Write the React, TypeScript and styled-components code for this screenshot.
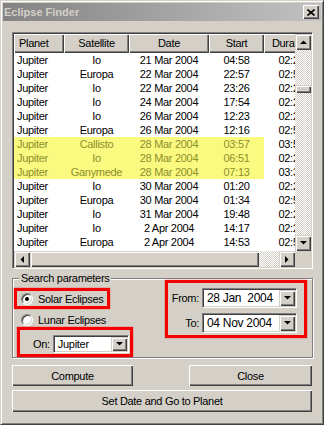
import React from 'react';
import styled, { createGlobalStyle, css } from 'styled-components';

const GlobalStyle = createGlobalStyle`
  html, body { margin: 0; padding: 0; background: #d4d0c8; }
  body { font-family: "Liberation Sans", Arial, sans-serif; font-size: 11px; color: #000; letter-spacing: -0.3px; }
  * { box-sizing: border-box; }
`;

const raisedBtn = css`
  background: #d4d0c8;
  box-shadow: inset 1px 1px #fff, inset -1px -1px #404040, inset -2px -2px #808080;
`;

const raisedScroll = css`
  background: #d4d0c8;
  box-shadow: inset 1px 1px #d4d0c8, inset 2px 2px #fff, inset -1px -1px #404040, inset -2px -2px #808080;
`;

const sunken = css`
  border: 1px solid;
  border-color: #808080 #fff #fff #808080;
  box-shadow: inset 1px 1px #404040, inset -1px -1px #d4d0c8;
`;

const checker = css`
  background: repeating-conic-gradient(#d4d0c8 0 25%, #fff 0 50%) 0 0 / 2px 2px;
`;

const Window = styled.div`
  width: 324px;
  height: 425px;
  display: flex;
  flex-direction: column;
  border: 1px solid;
  border-color: #d4d0c8 #404040 #404040 #d4d0c8;
  box-shadow: inset 1px 1px #fff, inset -1px -1px #808080;
  padding: 2px;
  background: #d4d0c8;
`;

const TitleBar = styled.div`
  height: 18px;
  display: flex;
  align-items: center;
  padding: 0 2px 0 1px;
  background: linear-gradient(to right, #838383, #c2c2c2);
  color: #d4d0c8;
  font-weight: bold;
  font-size: 11px;
  letter-spacing: 0;
`;

const TitleText = styled.span`
  flex: 1;
`;

const CloseButton = styled.div`
  ${raisedBtn};
  width: 16px;
  height: 14px;
  display: flex;
  align-items: center;
  justify-content: center;
`;

const Body = styled.div`
  flex: 1;
  display: flex;
  flex-direction: column;
  padding: 11px 8px 0 9px;
`;

const ListBox = styled.div`
  ${sunken};
  height: 237px;
  padding: 1px;
  display: grid;
  grid-template-columns: 1fr 16px;
  grid-template-rows: 1fr 16px;
  background: #fff;
`;

const ListContent = styled.div`
  grid-area: 1 / 1;
  overflow: hidden;
  background: #fff;
`;

const Table = styled.div`
  display: grid;
  grid-template-columns: 50px 65px 80px 55px 55px;
  width: max-content;
`;

const HeaderCell = styled.div<{ $align?: string }>`
  ${raisedBtn};
  height: 19px;
  line-height: 19px;
  padding-left: ${(p) => (p.$align === 'left' ? '5px' : '0')};
  text-align: ${(p) => p.$align || 'center'};
  white-space: nowrap;
  overflow: hidden;
`;

const Cell = styled.div<{ $align?: string; $hl?: boolean }>`
  height: 14px;
  line-height: 14px;
  white-space: nowrap;
  overflow: hidden;
  text-align: ${(p) => p.$align || 'center'};
  padding-left: ${(p) => (p.$align === 'left' ? '3px' : '0')};
  background: ${(p) => (p.$hl ? '#fafa80' : '#fff')};
  color: ${(p) => (p.$hl ? '#8e8e2c' : '#000')};
`;

const VScroll = styled.div`
  grid-area: 1 / 2;
  display: flex;
  flex-direction: column;
`;

const HScroll = styled.div`
  grid-area: 2 / 1;
  display: flex;
`;

const Corner = styled.div`
  grid-area: 2 / 2;
  background: #d4d0c8;
`;

const ScrollBtn = styled.div`
  ${raisedScroll};
  width: 16px;
  height: 16px;
  flex-shrink: 0;
  display: flex;
  align-items: center;
  justify-content: center;
`;

const Track = styled.div<{ $size?: number }>`
  ${checker};
  flex: ${(p) => (p.$size ? `0 0 ${p.$size}px` : '1')};
`;

const Thumb = styled.div<{ $w?: number; $h?: number }>`
  ${raisedScroll};
  flex-shrink: 0;
  width: ${(p) => (p.$w ? `${p.$w}px` : '16px')};
  height: ${(p) => (p.$h ? `${p.$h}px` : '16px')};
`;

const Group = styled.div`
  position: relative;
  margin-top: 9px;
  border: 1px solid #808080;
  box-shadow: inset 1px 1px #fff, 1px 1px #fff;
  padding: 0 5px 0 1px;
  display: flex;
  justify-content: space-between;
  align-items: flex-start;
`;

const Legend = styled.span`
  position: absolute;
  top: -7px;
  left: 6px;
  padding: 0 2px;
  line-height: 13px;
  background: #d4d0c8;
`;

const LeftCol = styled.div`
  display: flex;
  flex-direction: column;
  align-items: flex-start;
  margin-top: 9px;
`;

const Mark = styled.div`
  border: 3px solid #f40000;
  box-shadow: 0 0 1px #f40000;
`;

const SolarMark = styled(Mark)`
  width: 96px;
  height: 21px;
  display: flex;
  align-items: center;
  gap: 5px;
  padding-left: 4px;
  white-space: nowrap;
`;

const RadioRow = styled.div`
  height: 14px;
  margin-top: 4px;
  padding-left: 7px;
  display: flex;
  align-items: center;
  gap: 5px;
  white-space: nowrap;
`;

const Radio = styled.span<{ $checked?: boolean }>`
  position: relative;
  width: 12px;
  height: 12px;
  flex-shrink: 0;
  border-radius: 50%;
  background: #fff;
  border: 1px solid;
  border-color: #808080 #fff #fff #808080;
  box-shadow: inset 1px 1px #404040, inset -1px -1px #d4d0c8;
  &::after {
    content: '';
    display: ${(p) => (p.$checked ? 'block' : 'none')};
    position: absolute;
    left: 3px;
    top: 3px;
    width: 4px;
    height: 4px;
    border-radius: 50%;
    background: #000;
  }
`;

const OnMark = styled(Mark)`
  width: 116px;
  margin-left: 3px;
  padding: 5px 1px 1px 13px;
  display: flex;
  align-items: center;
  gap: 3px;
`;

const DateMark = styled(Mark)`
  margin-top: 1px;
  width: 142px;
  padding: 5px 7px 2px 3px;
  display: grid;
  grid-template-columns: 28px 95px;
  column-gap: 3px;
  row-gap: 5px;
  align-items: center;
`;

const FieldLabel = styled.span`
  text-align: right;
`;

const Combo = styled.div<{ $w: number; $h: number }>`
  ${sunken};
  width: ${(p) => p.$w}px;
  height: ${(p) => p.$h}px;
  background: #fff;
  padding: 1px;
  display: flex;
  align-items: stretch;
`;

const ComboText = styled.span<{ $size?: number }>`
  flex: 1;
  padding-left: 3px;
  display: flex;
  align-items: center;
  font-size: ${(p) => p.$size || 11}px;
  white-space: pre;
`;

const ComboBtn = styled.div`
  ${raisedScroll};
  width: 16px;
  display: flex;
  align-items: center;
  justify-content: center;
`;

const ButtonRow = styled.div`
  display: flex;
  justify-content: space-between;
  margin-top: 7px;
  margin-right: 1px;
`;

const PushButton = styled.div<{ $w?: number; $h?: number }>`
  ${raisedBtn};
  width: ${(p) => (p.$w ? `${p.$w}px` : 'auto')};
  height: ${(p) => p.$h || 21}px;
  display: flex;
  align-items: center;
  justify-content: center;
`;

const WideButton = styled(PushButton)`
  margin-top: 4px;
  margin-right: 1px;
`;

const Arrow = ({ dir }: { dir: 'up' | 'down' | 'left' | 'right' }) => {
  const vertical = dir === 'up' || dir === 'down';
  const w = vertical ? 7 : 4;
  const h = vertical ? 4 : 7;
  const pts =
    dir === 'up'
      ? '0,4 7,4 3.5,0.5'
      : dir === 'down'
      ? '0,0 7,0 3.5,3.5'
      : dir === 'left'
      ? '4,0 4,7 0.5,3.5'
      : '0,0 0,7 3.5,3.5';
  return (
    <svg width={w} height={h} viewBox={`0 0 ${w} ${h}`}>
      <polygon points={pts} fill="#000" />
    </svg>
  );
};

type Row = [string, string, string, string, string, boolean?];

const rows: Row[] = [
  ['Jupiter', 'Io', '21 Mar 2004', '04:58', '02:24'],
  ['Jupiter', 'Europa', '22 Mar 2004', '22:57', '02:52'],
  ['Jupiter', 'Io', '22 Mar 2004', '23:26', '02:24'],
  ['Jupiter', 'Io', '24 Mar 2004', '17:54', '02:24'],
  ['Jupiter', 'Io', '26 Mar 2004', '12:23', '02:24'],
  ['Jupiter', 'Europa', '26 Mar 2004', '12:16', '02:52'],
  ['Jupiter', 'Callisto', '28 Mar 2004', '03:57', '03:51', true],
  ['Jupiter', 'Io', '28 Mar 2004', '06:51', '02:24', true],
  ['Jupiter', 'Ganymede', '28 Mar 2004', '07:13', '03:31', true],
  ['Jupiter', 'Io', '30 Mar 2004', '01:20', '02:24'],
  ['Jupiter', 'Europa', '30 Mar 2004', '01:34', '02:52'],
  ['Jupiter', 'Io', '31 Mar 2004', '19:48', '02:24'],
  ['Jupiter', 'Io', '2 Apr 2004', '14:17', '02:24'],
  ['Jupiter', 'Europa', '2 Apr 2004', '14:53', '02:52'],
];

export default function App() {
  return (
    <>
      <GlobalStyle />
      <Window>
        <TitleBar>
          <TitleText>Eclipse Finder</TitleText>
          <CloseButton>
            <svg width="8" height="7" viewBox="0 0 8 7">
              <path d="M0.5 0.5 L7.5 6.5 M7.5 0.5 L0.5 6.5" stroke="#000" strokeWidth="1.6" />
            </svg>
          </CloseButton>
        </TitleBar>
        <Body>
          <ListBox>
            <ListContent>
              <Table>
                <HeaderCell $align="left">Planet</HeaderCell>
                <HeaderCell>Satellite</HeaderCell>
                <HeaderCell>Date</HeaderCell>
                <HeaderCell>Start</HeaderCell>
                <HeaderCell>Duration</HeaderCell>
                {rows.map((r, i) => (
                  <React.Fragment key={i}>
                    <Cell $align="left" $hl={r[5]}>{r[0]}</Cell>
                    <Cell $hl={r[5]}>{r[1]}</Cell>
                    <Cell $hl={r[5]}>{r[2]}</Cell>
                    <Cell $hl={r[5]}>{r[3]}</Cell>
                    <Cell>{r[4]}</Cell>
                  </React.Fragment>
                ))}
              </Table>
            </ListContent>
            <VScroll>
              <ScrollBtn><Arrow dir="up" /></ScrollBtn>
              <Track $size={35} />
              <Thumb $h={8} />
              <Track />
              <ScrollBtn><Arrow dir="down" /></ScrollBtn>
            </VScroll>
            <HScroll>
              <ScrollBtn><Arrow dir="left" /></ScrollBtn>
              <Thumb $w={229} />
              <Track />
              <ScrollBtn><Arrow dir="right" /></ScrollBtn>
            </HScroll>
            <Corner />
          </ListBox>

          <Group>
            <Legend>Search parameters</Legend>
            <LeftCol>
              <SolarMark>
                <Radio $checked />
                <span>Solar Eclipses</span>
              </SolarMark>
              <RadioRow>
                <Radio />
                <span>Lunar Eclipses</span>
              </RadioRow>
              <OnMark>
                <span>On:</span>
                <Combo $w={77} $h={18}>
                  <ComboText>Jupiter</ComboText>
                  <ComboBtn><Arrow dir="down" /></ComboBtn>
                </Combo>
              </OnMark>
            </LeftCol>
            <DateMark>
              <FieldLabel>From:</FieldLabel>
              <Combo $w={95} $h={20}>
                <ComboText $size={12}>28 Jan  2004</ComboText>
                <ComboBtn><Arrow dir="down" /></ComboBtn>
              </Combo>
              <FieldLabel>To:</FieldLabel>
              <Combo $w={95} $h={20}>
                <ComboText $size={12}>04 Nov 2004</ComboText>
                <ComboBtn><Arrow dir="down" /></ComboBtn>
              </Combo>
            </DateMark>
          </Group>

          <ButtonRow>
            <PushButton $w={121}>Compute</PushButton>
            <PushButton $w={123}>Close</PushButton>
          </ButtonRow>
          <WideButton $h={22}>Set Date and Go to Planet</WideButton>
        </Body>
      </Window>
    </>
  );
}
